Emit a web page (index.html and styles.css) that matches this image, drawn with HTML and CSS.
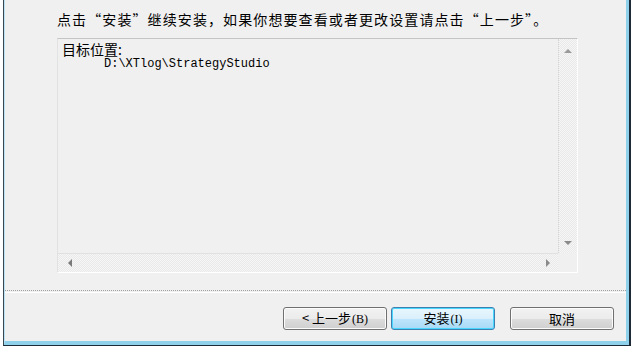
FILE: index.html
```html
<!DOCTYPE html>
<html>

<head>
    <title>安装</title>
    <link rel="stylesheet" href="styles.css">
</head>

<body>
    <div class="frame">
        <div class="glass">
            <div class="client">
                <p class="intro">点击“安装”继续安装，如果你想要查看或者更改设置请点击“上一步”。</p>

                <div class="log">
                    <div class="log-text">
                        <div class="log-title">目标位置:</div>
                        <div class="log-path">D:\XTlog\StrategyStudio</div>
                    </div>
                    <div class="vbar">
                        <span class="arrow up"></span>
                        <span class="arrow down"></span>
                    </div>
                    <div class="hbar">
                        <span class="arrow left"></span>
                        <span class="arrow right"></span>
                    </div>
                    <div class="corner"></div>
                </div>

                <div class="separator"></div>

                <div class="buttons">
                    <button class="btn">&lt; 上一步<span class="key">(B)</span></button>
                    <button class="btn default">安装<span class="key">(I)</span></button>
                    <button class="btn cancel">取消</button>
                </div>
            </div>
        </div>
    </div>
</body>

</html>
```

FILE: styles.css
```css
body {
    margin: 0;
    padding: 0;
    background-color: #fff;
    font-family: "Noto Sans CJK SC", "Liberation Sans", sans-serif;
    color: #000;
}

.frame {
    margin-left: 3px;
    width: 628px;
    height: 346px;
    box-sizing: border-box;
    border-left: 1px solid #3a4650;
    border-right: 2px solid #1d2b38;
    border-bottom: 1px solid #1d2b38;
}

.glass {
    height: 100%;
    box-sizing: border-box;
    border-right: 3px solid #8fd0ea;
    border-bottom: 4px solid #8fd0ea;
    border-left: 1px solid #b9e2f2;
}

.client {
    height: 100%;
    background-color: #f0f0f0;
    padding-left: 52px;
    box-sizing: border-box;
}

.intro {
    margin: 0;
    padding-top: 9px;
    font-size: 14px;
    line-height: 20px;
    letter-spacing: 1.1px;
    white-space: nowrap;
}

.log {
    margin-top: 9px;
    width: 521px;
    height: 235px;
    box-sizing: border-box;
    border: 1px solid #fff;
    border-top-color: #c4c4c4;
    border-left-color: #e2e2e2;
    display: grid;
    grid-template-columns: 1fr 19px;
    grid-template-rows: 1fr 19px;
}

.log-text {
    padding: 2px 0 0 4px;
}

.log-title {
    font-size: 14px;
    line-height: 17px;
}

.log-path {
    font-family: "Liberation Mono", monospace;
    font-size: 12px;
    line-height: 12px;
    padding-left: 42px;
}

.vbar,
.hbar {
    display: flex;
    justify-content: space-between;
    align-items: center;
    background-image: repeating-conic-gradient(#e9e9e9 0 25%, #f6f6f6 0 50%);
    background-size: 2px 2px;
}

.vbar {
    flex-direction: column;
    padding: 10px 0 8px;
    border-left: 1px dotted #d6d6d6;
}

.hbar {
    padding: 0 8px 0 10px;
    border-top: 1px solid #e0e0e0;
}

.corner {
    background-color: #f0f0f0;
}

.arrow {
    width: 0;
    height: 0;
    border: 4px solid transparent;
}

.up {
    border-top: none;
    border-bottom: 4px solid #9a9a9a;
}

.down {
    border-bottom: none;
    border-top: 4px solid #8a8a8a;
}

.left {
    border-left: none;
    border-right: 4px solid #7a7a7a;
}

.right {
    border-right: none;
    border-left: 4px solid #8a8a8a;
}

.separator {
    margin-top: 17px;
    margin-left: -52px;
    height: 1px;
    border-top: 1px dotted #a0a0a0;
    border-bottom: 1px solid #fff;
}

.buttons {
    display: flex;
    margin-top: 14px;
    padding-left: 226px;
    gap: 4px;
}

.btn {
    width: 104px;
    height: 23px;
    padding: 0;
    font-family: "Noto Sans CJK SC", "Liberation Sans", sans-serif;
    font-size: 13px;
    line-height: 19px;
    color: #000;
    border: 1px solid #707070;
    border-radius: 3px;
    background: linear-gradient(#f2f2f2 0, #ebebeb 50%, #dddddd 51%, #cfcfcf 100%);
    box-shadow: inset 0 0 0 1px #fcfcfc;
}

.btn.default {
    border-color: #3c7fb1;
    background: linear-gradient(#eaf6fd 0, #d9f0fc 50%, #bee6fd 51%, #a7d9f5 100%);
    box-shadow: inset 0 0 0 1px #48d7ff;
}

.btn.cancel {
    margin-left: 11px;
}

.key {
    font-family: "Liberation Serif", serif;
    font-size: 12px;
    margin-left: 1px;
}
```
